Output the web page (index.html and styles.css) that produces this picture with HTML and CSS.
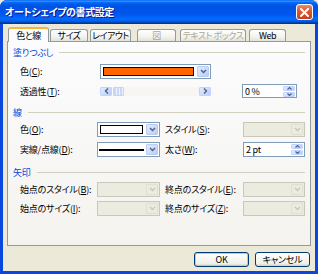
FILE: index.html
```html
<!DOCTYPE html>
<html lang="ja">
<head>
    <meta charset="UTF-8">
    <title>オートシェイプの書式設定</title>
    <link rel="stylesheet" href="styles.css">
</head>
<body>

    <div class="window">
        <div class="titlebar">
            <span class="title">オートシェイプの書式設定</span>
            <span class="close">
                <svg width="9" height="9" viewBox="0 0 9 9"><path d="M1 1 L8 8 M8 1 L1 8" stroke="#fff" stroke-width="2" stroke-linecap="square"/></svg>
            </span>
        </div>

        <div class="frame">
            <div class="tabs">
                <div class="tab active tab-w41">色と線</div>
                <div class="tab tab-w38">サイズ</div>
                <div class="tab tab-w41">レイアウト</div>
                <div class="tab disabled tab-pic">図</div>
                <div class="tab disabled tab-text">テキスト ボックス</div>
                <div class="tab tab-web">Web</div>
            </div>

            <div class="panel">
                <div class="group-title">塗りつぶし</div>

                <div class="row fill-row first">
                    <span class="label">色(<u>C</u>):</span>
                    <div class="combo">
                        <div class="swatch orange"></div>
                        <div class="combo-btn"><svg width="7" height="5" viewBox="0 0 7 5"><path d="M1 1 L3.5 3.5 L6 1" fill="none" stroke="#4d6185" stroke-width="1.4"/></svg></div>
                    </div>
                </div>

                <div class="row fill-row second">
                    <span class="label">透過性(<u>T</u>):</span>
                    <div class="slider">
                        <div class="sbtn"><svg width="5" height="6" viewBox="0 0 5 6"><path d="M4 0.5 L1.5 3 L4 5.5" fill="none" stroke="#4d6185" stroke-width="1.4"/></svg></div>
                        <div class="thumb"></div>
                        <div class="track"></div>
                        <div class="sbtn"><svg width="5" height="6" viewBox="0 0 5 6"><path d="M1 0.5 L3.5 3 L1 5.5" fill="none" stroke="#4d6185" stroke-width="1.4"/></svg></div>
                    </div>
                    <div class="spin spin-fill">
                        <span class="spin-val">0 %</span>
                        <div class="spin-btns">
                            <div class="spin-half"><svg width="5" height="3" viewBox="0 0 5 3"><path d="M0.5 2.5 L2.5 0.5 L4.5 2.5" fill="none" stroke="#4d6185" stroke-width="1.1"/></svg></div>
                            <div class="spin-half"><svg width="5" height="3" viewBox="0 0 5 3"><path d="M0.5 0.5 L2.5 2.5 L4.5 0.5" fill="none" stroke="#4d6185" stroke-width="1.1"/></svg></div>
                        </div>
                    </div>
                </div>

                <div class="group-title gap-line">線</div>

                <div class="row line-row first">
                    <span class="label">色(<u>O</u>):</span>
                    <div class="combo">
                        <div class="swatch white"></div>
                        <div class="combo-btn"><svg width="7" height="5" viewBox="0 0 7 5"><path d="M1 1 L3.5 3.5 L6 1" fill="none" stroke="#4d6185" stroke-width="1.4"/></svg></div>
                    </div>
                    <span class="label label2">スタイル(<u>S</u>):</span>
                    <div class="combo off">
                        <div class="swatch none"></div>
                        <div class="combo-btn"><svg width="7" height="5" viewBox="0 0 7 5"><path d="M1 1 L3.5 3.5 L6 1" fill="none" stroke="#c9c7ba" stroke-width="1.4"/></svg></div>
                    </div>
                </div>

                <div class="row line-row">
                    <span class="label">実線/点線(<u>D</u>):</span>
                    <div class="combo">
                        <div class="dash"></div>
                        <div class="combo-btn"><svg width="7" height="5" viewBox="0 0 7 5"><path d="M1 1 L3.5 3.5 L6 1" fill="none" stroke="#4d6185" stroke-width="1.4"/></svg></div>
                    </div>
                    <span class="label label2">太さ(<u>W</u>):</span>
                    <div class="spin">
                        <span class="spin-val">2 pt</span>
                        <div class="spin-btns">
                            <div class="spin-half"><svg width="5" height="3" viewBox="0 0 5 3"><path d="M0.5 2.5 L2.5 0.5 L4.5 2.5" fill="none" stroke="#4d6185" stroke-width="1.1"/></svg></div>
                            <div class="spin-half"><svg width="5" height="3" viewBox="0 0 5 3"><path d="M0.5 0.5 L2.5 2.5 L4.5 0.5" fill="none" stroke="#4d6185" stroke-width="1.1"/></svg></div>
                        </div>
                    </div>
                </div>

                <div class="group-title gap-arrow">矢印</div>

                <div class="row line-row first">
                    <span class="label">始点のスタイル(<u>B</u>):</span>
                    <div class="combo off">
                        <div class="swatch none"></div>
                        <div class="combo-btn"><svg width="7" height="5" viewBox="0 0 7 5"><path d="M1 1 L3.5 3.5 L6 1" fill="none" stroke="#c9c7ba" stroke-width="1.4"/></svg></div>
                    </div>
                    <span class="label label2">終点のスタイル(<u>E</u>):</span>
                    <div class="combo off">
                        <div class="swatch none"></div>
                        <div class="combo-btn"><svg width="7" height="5" viewBox="0 0 7 5"><path d="M1 1 L3.5 3.5 L6 1" fill="none" stroke="#c9c7ba" stroke-width="1.4"/></svg></div>
                    </div>
                </div>

                <div class="row line-row tight">
                    <span class="label">始点のサイズ(<u>I</u>):</span>
                    <div class="combo off">
                        <div class="swatch none"></div>
                        <div class="combo-btn"><svg width="7" height="5" viewBox="0 0 7 5"><path d="M1 1 L3.5 3.5 L6 1" fill="none" stroke="#c9c7ba" stroke-width="1.4"/></svg></div>
                    </div>
                    <span class="label label2">終点のサイズ(<u>Z</u>):</span>
                    <div class="combo off">
                        <div class="swatch none"></div>
                        <div class="combo-btn"><svg width="7" height="5" viewBox="0 0 7 5"><path d="M1 1 L3.5 3.5 L6 1" fill="none" stroke="#c9c7ba" stroke-width="1.4"/></svg></div>
                    </div>
                </div>
            </div>

            <div class="buttons">
                <button class="btn btn-default">OK</button>
                <button class="btn">キャンセル</button>
            </div>
        </div>
    </div>

</body>
</html>
```

FILE: styles.css
```css
body {
    margin: 0;
    font-family: "Noto Sans CJK JP", "Noto Sans", sans-serif;
    font-size: 9px;
    font-feature-settings: "palt";
    letter-spacing: -0.2px;
    color: #000;
    background-color: #ece9d8;
}

.window {
    width: 318px;
    height: 274px;
    box-sizing: border-box;
    display: flex;
    flex-direction: column;
    background-color: #0a48dd;
    border-radius: 7px 7px 0 0;
    overflow: hidden;
}

.titlebar {
    height: 24px;
    flex: none;
    display: flex;
    align-items: center;
    justify-content: space-between;
    padding: 0 5px 0 5px;
    background: linear-gradient(to bottom, #0058ee 0%, #3593ff 4%, #288eff 6%, #127dff 8%, #036ffc 10%, #0262ee 14%, #0057e5 20%, #0054e3 24%, #0055eb 56%, #005bf5 66%, #026afe 76%, #0062ef 86%, #0052d6 92%, #0040ab 94%, #003092 100%);
}

.title {
    color: white;
    font-weight: bold;
    font-size: 10px;
    letter-spacing: -0.4px;
    text-shadow: 1px 1px #0f1089;
    line-height: 12px;
}

.close {
    width: 17px;
    height: 16px;
    box-sizing: border-box;
    border: 1px solid #fff;
    border-radius: 3px;
    display: flex;
    align-items: center;
    justify-content: center;
    background: linear-gradient(to bottom, #ec8c6f, #dd5a32 40%, #c8401a);
}

.frame {
    flex: 1;
    margin: 0 3px 3px 3px;
    padding: 3px 4px 0 4px;
    background-color: #ece9d8;
}

.tabs {
    height: 14px;
    display: flex;
    align-items: flex-end;
    padding-left: 1px;
}

.tab {
    height: 12px;
    box-sizing: border-box;
    border: 1px solid #919b9c;
    border-bottom: none;
    border-radius: 3px 3px 0 0;
    background: linear-gradient(to bottom, #ffffff, #f3f3ef 60%, #e4e2d7);
    display: flex;
    align-items: center;
    justify-content: center;
    line-height: 10px;
    margin-right: 1px;
    white-space: nowrap;
    overflow: hidden;
    letter-spacing: -0.5px;
}

.tab.active {
    height: 15px;
    margin-bottom: -1px;
    border-top: 2px solid #f5b43c;
    background: #fcfcfe;
    position: relative;
    z-index: 1;
}

.tab.disabled {
    color: #aca899;
}

.tab-w41 { width: 41px; }
.tab-w38 { width: 38px; margin-right: 2px; }
.tab-pic { width: 39px; margin-left: 5px; margin-right: 4px; }
.tab-text { width: 66px; margin-right: 3px; }
.tab-web { width: 37px; }

.panel {
    height: 205px;
    box-sizing: border-box;
    border: 1px solid #919b9c;
    background: linear-gradient(to bottom, #fcfcfe, #f4f3ee);
    padding: 4px 5px 0 5px;
}

.group-title {
    display: flex;
    align-items: center;
    height: 12px;
    color: #0046d5;
}

.group-title::after {
    content: "";
    flex: 1;
    height: 1px;
    margin-left: 6px;
    background-color: #d0d0bf;
}

.gap-line { margin-top: 8px; }
.gap-arrow { margin-top: 9px; }

.row {
    display: flex;
    align-items: center;
    padding-left: 7px;
    margin-top: 5px;
}

.row.first { margin-top: 4px; }
.row.tight { margin-top: 4px; }
.fill-row.first { margin-top: 6px; }

.label {
    white-space: nowrap;
}

.fill-row .label { width: 80px; }
.line-row .label { width: 77px; }
.line-row .label2 { width: 78px; margin-left: 5px; }

.combo {
    height: 15px;
    box-sizing: border-box;
    border: 1px solid #7f9db9;
    background: white;
    display: flex;
    padding: 1px;
    gap: 2px;
}

.fill-row .combo { width: 111px; }
.line-row .combo { width: 63px; }
.line-row .label2 + .combo { width: 62px; }

.combo-btn {
    width: 12px;
    box-sizing: border-box;
    border: 1px solid #bccbf0;
    border-radius: 1px;
    background: linear-gradient(135deg, #e3ebfe, #b9ccf8);
    display: flex;
    align-items: center;
    justify-content: center;
}

.combo.off {
    border-color: #c9c7ba;
    background: #ecebe0;
}

.combo.off .combo-btn {
    border-color: #e1dfd3;
    background: #ecebe0;
}

.swatch {
    flex: 1;
    margin: 1px;
    box-sizing: border-box;
    border: 1px solid #000;
}

.swatch.orange { background: #ff6600; }
.swatch.white { background: #fff; }
.swatch.none { border: none; }

.dash {
    flex: 1;
    height: 2px;
    align-self: center;
    background: #000;
}

.slider {
    width: 111px;
    height: 9px;
    display: flex;
}

.sbtn {
    width: 12px;
    box-sizing: border-box;
    border: 1px solid #c3d3fd;
    border-radius: 1px;
    background: linear-gradient(135deg, #e3ebfe, #b9ccf8);
    display: flex;
    align-items: center;
    justify-content: center;
}

.thumb {
    width: 11px;
    margin-left: 1px;
    box-sizing: border-box;
    border: 1px solid #c3d3fd;
    border-radius: 1px;
    background: repeating-linear-gradient(to right, #c9d8fc 0, #c9d8fc 2px, #eef3fe 2px, #eef3fe 3px);
}

.track {
    flex: 1;
    background: #f7f6f2;
}

.spin {
    width: 62px;
    height: 15px;
    box-sizing: border-box;
    border: 1px solid #7f9db9;
    background: white;
    display: flex;
    padding: 1px;
}

.spin-fill {
    width: 55px;
    height: 14px;
    margin-left: 31px;
}

.spin-val {
    flex: 1;
    line-height: 11px;
    padding-left: 1px;
}

.spin-btns {
    width: 12px;
    display: flex;
    flex-direction: column;
    gap: 1px;
}

.spin-half {
    flex: 1;
    box-sizing: border-box;
    border: 1px solid #c3d3fd;
    border-radius: 1px;
    background: linear-gradient(135deg, #e3ebfe, #b9ccf8);
    display: flex;
    align-items: center;
    justify-content: center;
}

.buttons {
    display: flex;
    justify-content: flex-end;
    gap: 6px;
    margin-top: 6px;
    padding-right: 1px;
}

.btn {
    width: 55px;
    height: 15px;
    padding: 0;
    font: inherit;
    letter-spacing: -0.2px;
    line-height: 11px;
    border: 1px solid #003c74;
    border-radius: 3px;
    background: linear-gradient(to bottom, #ffffff, #f0f0ea 80%, #d6d0c5);
    color: #000;
}

.btn-default {
    box-shadow: inset 0 0 0 1px #f7c25c;
}
```
